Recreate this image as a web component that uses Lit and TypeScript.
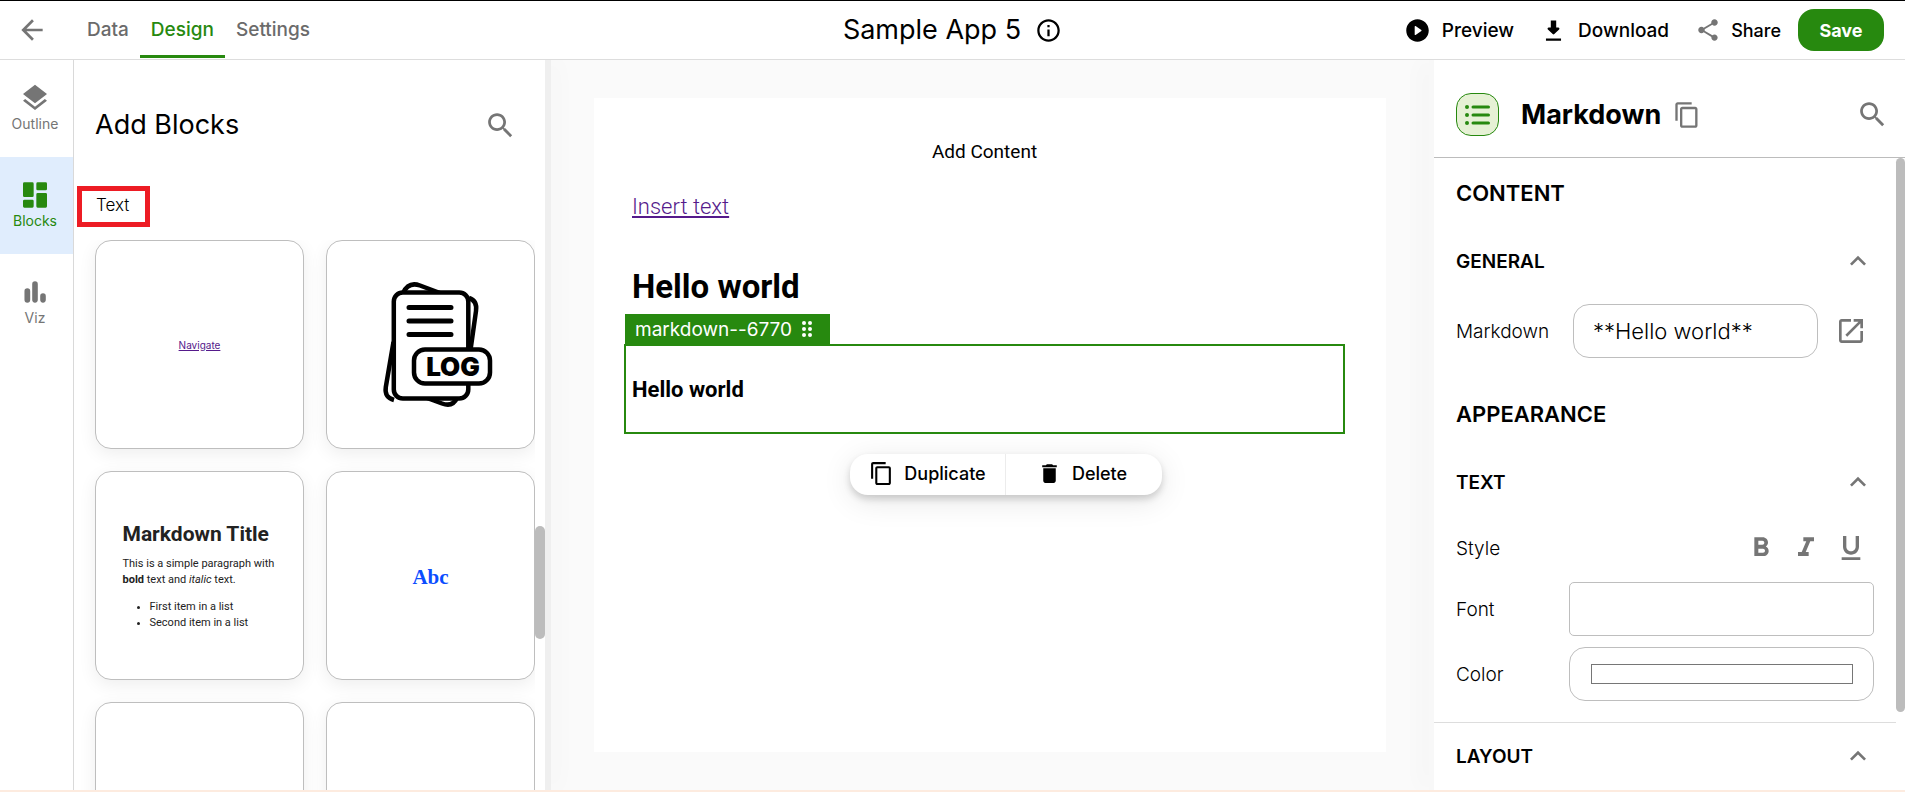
import { LitElement, html, svg, css } from "lit";
import { customElement, property } from "lit/decorators.js";

const ICONS: Record<string, string> = {
  back: "M20 11H7.83l5.59-5.59L12 4l-8 8 8 8 1.41-1.41L7.83 13H20v-2z",
  info: "M11 7h2v2h-2zm0 4h2v6h-2zm1-9C6.48 2 2 6.48 2 12s4.48 10 10 10 10-4.48 10-10S17.52 2 12 2zm0 18c-4.41 0-8-3.59-8-8s3.59-8 8-8 8 3.59 8 8-3.59 8-8 8z",
  play: "M12 2C6.48 2 2 6.48 2 12s4.48 10 10 10 10-4.48 10-10S17.52 2 12 2zM9.5 15.5v-7c0-.4.45-.65.8-.42l5.1 3.5c.3.2.3.64 0 .84l-5.1 3.5c-.35.23-.8-.02-.8-.42z",
  download: "M9.6 3.2h4.8v6.1h1.9c.9 0 1.3 1 .7 1.7l-4.3 4.2c-.4.4-1 .4-1.4 0L7 11c-.6-.7-.2-1.7.7-1.7h1.9zM5.3 19h13.4v2.2H5.3z",
  share: "M18 16.08c-.76 0-1.44.3-1.96.77L8.91 12.7c.05-.23.09-.46.09-.7s-.04-.47-.09-.7l7.05-4.11c.54.5 1.25.81 2.04.81 1.66 0 3-1.34 3-3s-1.34-3-3-3-3 1.34-3 3c0 .24.04.47.09.7L8.04 9.81C7.5 9.31 6.79 9 6 9c-1.66 0-3 1.34-3 3s1.34 3 3 3c.79 0 1.5-.31 2.04-.81l7.12 4.16c-.05.21-.08.43-.08.65 0 1.61 1.31 2.92 2.92 2.92s2.92-1.31 2.92-2.92-1.31-2.92-2.92-2.92z",
  layers: "m11.99 18.54-7.37-5.73L3 14.07l9 7 9-7-1.63-1.27-7.38 5.74zM12 16l7.36-5.73L21 9l-9-7-9 7 1.63 1.27L12 16z",
  blocks: "M4 2.5h6a1 1 0 0 1 1 1v9a1 1 0 0 1-1 1H4a1 1 0 0 1-1-1v-9a1 1 0 0 1 1-1zM14 2.5h6a1 1 0 0 1 1 1v4a1 1 0 0 1-1 1h-6a1 1 0 0 1-1-1v-4a1 1 0 0 1 1-1zM4 15.5h6a1 1 0 0 1 1 1v4a1 1 0 0 1-1 1H4a1 1 0 0 1-1-1v-4a1 1 0 0 1 1-1zM14 10.5h6a1 1 0 0 1 1 1v9a1 1 0 0 1-1 1h-6a1 1 0 0 1-1-1v-9a1 1 0 0 1 1-1z",
  viz: "M6.25 9.2a2.15 2.15 0 0 1 2.15 2.15v6.5a2.15 2.15 0 0 1-4.3 0v-6.5A2.15 2.15 0 0 1 6.25 9.2zM12 4a2.1 2.1 0 0 1 2.1 2.1v11.8a2.1 2.1 0 0 1-4.2 0V6.1A2.1 2.1 0 0 1 12 4zM18 13a2.1 2.1 0 0 1 2.1 2.1v2.8a2.1 2.1 0 0 1-4.2 0v-2.8A2.1 2.1 0 0 1 18 13z",
  search: "M15.5 14h-.79l-.28-.27C15.41 12.59 16 11.11 16 9.5 16 5.91 13.09 3 9.5 3S3 5.91 3 9.5 5.91 16 9.5 16c1.61 0 3.09-.59 4.23-1.57l.27.28v.79l5 4.99L20.49 19l-4.99-5zm-6 0C7.01 14 5 11.99 5 9.5S7.01 5 9.5 5 14 7.01 14 9.5 11.99 14 9.5 14z",
  copy: "M16 1H4c-1.1 0-2 .9-2 2v14h2V3h12V1zm3 4H8c-1.1 0-2 .9-2 2v14c0 1.1.9 2 2 2h11c1.1 0 2-.9 2-2V7c0-1.1-.9-2-2-2zm0 16H8V7h11v14z",
  trash: "M6 19c0 1.1.9 2 2 2h8c1.1 0 2-.9 2-2V7H6v12zM19 4h-3.5l-1-1h-5l-1 1H5v2h14V4z",
  open: "M19 19H5V5h7V3H5c-1.11 0-2 .9-2 2v14c0 1.1.89 2 2 2h14c1.1 0 2-.9 2-2v-7h-2v7zM14 3v2h3.59l-9.83 9.83 1.41 1.41L19 6.41V10h2V3h-7z",
  up: "m12 8-6 6 1.41 1.41L12 10.83l4.59 4.58L18 14z",
  bold: "M15.6 10.79c.97-.67 1.65-1.77 1.65-2.79 0-2.26-1.75-4-4-4H7v14h7.04c2.09 0 3.71-1.7 3.71-3.79 0-1.52-.86-2.82-2.15-3.42zM10 6.5h3c.83 0 1.5.67 1.5 1.5s-.67 1.5-1.5 1.5h-3v-3zm3.5 9H10v-3h3.5c.83 0 1.5.67 1.5 1.5s-.67 1.5-1.5 1.5z",
  italic: "M10 4v3h2.21l-3.42 8H6v3h8v-3h-2.21l3.42-8H18V4z",
  underline: "M12 17c3.31 0 6-2.69 6-6V3h-2.5v8c0 1.93-1.57 3.5-3.5 3.5S8.5 12.93 8.5 11V3H6v8c0 3.31 2.69 6 6 6zm-7 2v2h14v-2H5z",
};

const icon = (name: string, size = 32) => svg`
  <svg width=${size} height=${size} viewBox="0 0 24 24" fill="currentColor" aria-hidden="true">
    <path d=${ICONS[name]}></path>
  </svg>`;

const base = css`
  * { box-sizing: border-box; }
  button, input, select { font: inherit; color: inherit; margin: 0; }
  button { background: none; border: 0; padding: 0; cursor: pointer; }
  h1, h2, h3, p, ul { margin: 0; }
  svg { display: block; flex: none; }
`;

@customElement("top-bar")
class TopBar extends LitElement {
  static styles = [base, css`
    :host { display: block; background: #fff; border-bottom: 1px solid #ddd; }
    .bar { display: grid; grid-template-columns: 1fr auto 1fr; align-items: center; height: 58px; }
    .left, .right, .title { display: flex; align-items: center; }
    .left { height: 100%; gap: 28px; padding-left: 16px; }
    .back { color: #757575; }
    .tabs { display: flex; height: 100%; }
    .tab { height: 57px; padding: 3px 11px 0; font-size: 19px; font-weight: 500; color: #6b6b6b; border-bottom: 3px solid transparent; }
    .tab.active { color: #27890f; border-color: #27890f; }
    .title { gap: 14px; }
    .title h1 { font-size: 27px; font-weight: 400; line-height: 36px; }
    .right { justify-content: flex-end; gap: 26px; padding-right: 21px; }
    .action { display: flex; align-items: center; gap: 11px; font-size: 19px; font-weight: 500; }
    .gray { gap: 10px; font-size: 18px; }
    .gray svg { color: #757575; }
    .pair { display: flex; gap: 17px; }
    .save { width: 86px; height: 42px; border-radius: 16px; background: #27890f; color: #fff; font-size: 18px; font-weight: 700; }
  `];
  render() {
    return html`<header class="bar">
      <div class="left">
        <button class="back" aria-label="Back">${icon("back")}</button>
        <nav class="tabs">
          <button class="tab">Data</button>
          <button class="tab active">Design</button>
          <button class="tab">Settings</button>
        </nav>
      </div>
      <div class="title"><h1>Sample App 5</h1>${icon("info", 27)}</div>
      <div class="right">
        <button class="action">${icon("play", 27)}Preview</button>
        <button class="action">${icon("download", 27)}Download</button>
        <div class="pair">
          <button class="action gray">${icon("share", 26)}Share</button>
          <button class="save">Save</button>
        </div>
      </div>
    </header>`;
  }
}

@customElement("side-rail")
class SideRail extends LitElement {
  static styles = [base, css`
    :host { display: block; background: #fff; border-right: 1px solid #d9d9d9; }
    .item { display: flex; flex-direction: column; align-items: center; justify-content: center; width: 73px; height: 97px; padding-right: 3px; padding-bottom: 2px; font-size: 14px; line-height: 20px; color: #757575; }
    .item.active { background: #e0edfd; color: #27890f; }
  `];
  render() {
    const items = [["layers", "Outline"], ["blocks", "Blocks"], ["viz", "Viz"]];
    return html`<nav>${items.map(([i, label]) => html`
      <button class="item ${label === "Blocks" ? "active" : ""}">${icon(i)}${label}</button>`)}</nav>`;
  }
}

const logArt = html`
  <svg width="126" height="126" viewBox="-15 0 126 126" fill="#fff" stroke="#000" stroke-width="4.5" aria-hidden="true">
    <path d="M10.500 60L2.800 105C1.800 112 4 116 11 118"></path>
    <path d="M86 16C92 18 94 22 93 29L87.500 68"></path>
    <path d="M20 11C24 2.500 30 .8 37 3.500l20 7.500M44 116l15 5.500c7 2.500 12 1 15-5.500"></path>
    <rect x="10.800" y="10.500" width="74.500" height="106" rx="9"></rect>
    <path d="M26 25.500h42M26 39h42M26 52.500h42" stroke-width="5" stroke-linecap="round"></path>
    <rect x="31" y="67.500" width="76" height="34" rx="11"></rect>
    <text x="70" y="94" text-anchor="middle" font-family="Inter, sans-serif" font-size="26" font-weight="900" fill="#000" stroke="none">LOG</text>
  </svg>`;

@customElement("blocks-panel")
class BlocksPanel extends LitElement {
  static styles = [base, css`
    :host { display: flex; flex-direction: column; width: 471px; min-height: 0; background: #fff; }
    .head { display: flex; align-items: center; justify-content: space-between; padding: 47px 28px 0 21px; }
    .head h2 { font-size: 27px; font-weight: 400; line-height: 36px; }
    .head button { color: #757575; }
    .tag { align-self: flex-start; margin: 43px 0 13px 3px; border: 5px solid #ed1c24; padding: 0 16px 2px 14px; font-size: 17px; font-weight: 300; line-height: 29px; }
    .scroll { flex: 1; min-height: 0; display: flex; overflow: hidden; }
    .grid { flex: 1; display: grid; grid-template-columns: 1fr 1fr; grid-auto-rows: 209px; gap: 22px; align-content: start; padding-left: 21px; overflow: hidden; }
    .card { display: flex; align-items: center; justify-content: center; background: #fff; border: 1px solid #bebebe; border-radius: 16px; box-shadow: 0 5px 18px rgba(0, 0, 0, 0.07); color: #222; }
    .nav { font: 10px Inter, sans-serif; color: #551a8b; }
    .abc { padding-top: 3px; font: bold 21px "Liberation Serif", serif; color: #0b4dff; }
    .md { width: 154px; font: 11px/16px Roboto, sans-serif; }
    .md h3 { font-size: 21px; line-height: 26px; margin-bottom: 9px; }
    .md ul { margin-top: 11px; padding-left: 27px; }
    .bar { width: 10px; padding-top: 286px; }
    .thumb { height: 113px; border-radius: 5px; background: #bcbcbc; }
  `];
  render() {
    return html`
      <div class="head"><h2>Add Blocks</h2><button aria-label="Search blocks">${icon("search", 33)}</button></div>
      <div class="tag">Text</div>
      <div class="scroll">
        <div class="grid">
          <div class="card"><a class="nav" href="#">Navigate</a></div>
          <div class="card">${logArt}</div>
          <div class="card"><div class="md">
            <h3>Markdown Title</h3>
            <p>This is a simple paragraph with <b>bold</b> text and <i>italic</i> text.</p>
            <ul><li>First item in a list</li><li>Second item in a list</li></ul>
          </div></div>
          <div class="card"><span class="abc">Abc</span></div>
          <div class="card"></div>
          <div class="card"></div>
        </div>
        <div class="bar"><div class="thumb"></div></div>
      </div>`;
  }
}

@customElement("design-canvas")
class DesignCanvas extends LitElement {
  static styles = [base, css`
    :host { flex: 1; min-width: 0; display: flex; padding: 38px 43px; background: #fafafa; }
    .page { flex: 1; display: flex; flex-direction: column; padding: 41px 41px 0 30px; background: #fff; font-family: Roboto, sans-serif; }
    .add { align-self: center; font-size: 19px; line-height: 26px; }
    .link { align-self: flex-start; margin: 28px 0 0 8px; font-size: 22px; font-weight: 300; line-height: 28px; color: #551a8b; }
    .big { margin: 46px 0 0 8px; font-size: 33px; line-height: 40px; }
    .name { align-self: flex-start; display: flex; align-items: center; gap: 6px; height: 30px; margin: 7px 0 0 1px; padding: 0 14px 0 10px; background: #27890f; color: #fff; font: 19px Inter, sans-serif; }
    .box { height: 90px; display: flex; align-items: center; padding-left: 6px; border: 2px solid #27890f; font-size: 22px; font-weight: 700; }
    .tools { align-self: center; display: flex; height: 41px; margin: 20px 0 0 43px; border-radius: 18px; background: #fff; box-shadow: 0 4px 7px rgba(0, 0, 0, 0.16), 0 6px 30px rgba(0, 0, 0, 0.1); font: 500 18px Inter, sans-serif; }
    .tools button { display: flex; align-items: center; justify-content: center; gap: 10px; width: 155px; padding-bottom: 2px; }
    .tools button + button { width: 157px; padding-right: 4px; border-left: 1px solid #ececec; }
  `];
  render() {
    return html`<main class="page">
      <div class="add">Add Content</div>
      <a class="link" href="#">Insert text</a>
      <h1 class="big">Hello world</h1>
      <div class="name">markdown--6770
        <svg width="18" height="18" viewBox="0 0 18 18" fill="#fff" aria-hidden="true">
          ${[3, 9, 15].map((y) => svg`<circle cx="6" cy=${y} r="2"></circle><circle cx="12" cy=${y} r="2"></circle>`)}
        </svg>
      </div>
      <div class="box">Hello world</div>
      <div class="tools">
        <button>${icon("copy", 25)}Duplicate</button>
        <button>${icon("trash", 25)}Delete</button>
      </div>
    </main>`;
  }
}

@customElement("section-head")
class SectionHead extends LitElement {
  @property() label = "";
  static styles = [base, css`
    :host { display: block; }
    .row { display: flex; width: 100%; align-items: center; justify-content: space-between; height: 32px; font-size: 19px; font-weight: 600; }
    .row svg { color: #757575; }
  `];
  render() {
    return html`<button class="row" aria-expanded="true">${this.label}${icon("up")}</button>`;
  }
}

@customElement("props-panel")
class PropsPanel extends LitElement {
  static styles = [base, css`
    :host { display: flex; flex-direction: column; width: 471px; min-height: 0; background: #fff; }
    .head { display: flex; align-items: center; height: 98px; padding: 12px 16px 0 22px; border-bottom: 1px solid #bcbcbc; color: #757575; }
    .badge { display: grid; place-items: center; width: 43px; height: 43px; border: 1px solid #27890f; border-radius: 15px; background: #e6f1d5; }
    .head h2 { margin: 0 12px 0 22px; font-size: 27px; font-weight: 700; line-height: 36px; color: #000; }
    .find { margin-left: auto; }
    .scroll { flex: 1; min-height: 0; display: flex; overflow: hidden; }
    .body { flex: 1; min-width: 0; overflow: hidden; }
    .bar { width: 9px; }
    .thumb { height: 554px; border-radius: 5px; background: #bcbcbc; }
    .group { padding: 0 22px; }
    .title { height: 87px; font-size: 22px; font-weight: 600; line-height: 70px; }
    .field { display: flex; align-items: center; height: 54px; font-size: 19px; font-weight: 300; }
    .field label, .field .label { width: 113px; }
    .first { margin: 27px 0 21px; padding-right: 7px; }
    .field.first label { width: 117px; }
    .first input { flex: 1; min-width: 0; height: 54px; margin-right: 17px; padding: 0 19px; border: 1px solid #bebebe; border-radius: 16px; font-size: 22px; background: #fff; }
    .icon { color: #757575; }
    .style { margin: 23px 0 7px; padding-right: 7px; }
    .marks { display: flex; gap: 13px; margin-left: auto; color: #757575; }
    .font { flex: 1; height: 54px; border: 1px solid #bebebe; border-radius: 5px; background: #fff; appearance: none; }
    .color { margin-top: 11px; margin-bottom: 21px; }
    .well { flex: 1; display: flex; height: 54px; padding: 16px 20px 16px 21px; border: 1px solid #bebebe; border-radius: 16px; }
    .swatch { flex: 1; width: 100%; height: 20px; padding: 0; border: 1px solid #767676; background: #fff; appearance: none; }
    .swatch::-webkit-color-swatch-wrapper { padding: 0; }
    .swatch::-webkit-color-swatch { border: 0; }
    .last { padding-top: 17px; border-top: 1px solid #ddd; }
  `];
  render() {
    return html`
      <div class="head">
        <span class="badge">
          <svg width="27" height="24" viewBox="0 0 27 24" fill="#27890f" stroke="#27890f" stroke-width="3" stroke-linecap="round" aria-hidden="true">
            ${[4, 12, 20].map((y) => svg`<circle cx="3" cy=${y} r="2" stroke="none"></circle><path d="M9 ${y}h15.5"></path>`)}
          </svg>
        </span>
        <h2>Markdown</h2>
        <button class="icon" aria-label="Copy">${icon("copy", 28)}</button>
        <button class="icon find" aria-label="Search properties">${icon("search", 33)}</button>
      </div>
      <div class="scroll">
        <div class="body">
          <div class="group">
            <h2 class="title">CONTENT</h2>
            <section-head label="GENERAL"></section-head>
            <div class="field first">
              <label for="md">Markdown</label>
              <input id="md" type="text" value="**Hello world**" />
              <button class="icon" aria-label="Open editor">${icon("open")}</button>
            </div>
            <h2 class="title">APPEARANCE</h2>
            <section-head label="TEXT"></section-head>
            <div class="field style">
              <span class="label">Style</span>
              <div class="marks">
                <button aria-label="Bold">${icon("bold")}</button>
                <button aria-label="Italic">${icon("italic")}</button>
                <button aria-label="Underline">${icon("underline")}</button>
              </div>
            </div>
            <div class="field"><label for="font">Font</label><select id="font" class="font"></select></div>
            <div class="field color"><label for="color">Color</label><div class="well"><input id="color" class="swatch" type="color" value="#ffffff" /></div></div>
          </div>
          <div class="group last"><section-head label="LAYOUT"></section-head></div>
        </div>
        <div class="bar"><div class="thumb"></div></div>
      </div>`;
  }
}

@customElement("app-root")
class AppRoot extends LitElement {
  static styles = [base, css`
    :host { display: flex; flex-direction: column; height: 100vh; overflow: hidden; border-top: 1px solid #000; border-bottom: 2px solid #fdebdf; box-sizing: border-box; font-family: Inter, "Liberation Sans", sans-serif; color: #000; background: #fff; }
    .work { flex: 1; min-height: 0; display: flex; }
    .edge { flex: none; z-index: 1; }
    .start { width: 6px; background: #efefef; box-shadow: 4px 0 22px rgba(0, 0, 0, 0.05); clip-path: inset(0 -30px 0 0); }
    .end { width: 5px; background: #f8f8f8; box-shadow: -4px 0 22px rgba(0, 0, 0, 0.07); clip-path: inset(0 0 0 -30px); }
    side-rail, blocks-panel, props-panel { flex: none; }
  `];
  render() {
    return html`
      <top-bar></top-bar>
      <div class="work">
        <side-rail></side-rail>
        <blocks-panel></blocks-panel>
        <div class="edge start"></div>
        <design-canvas></design-canvas>
        <div class="edge end"></div>
        <props-panel></props-panel>
      </div>`;
  }
}
